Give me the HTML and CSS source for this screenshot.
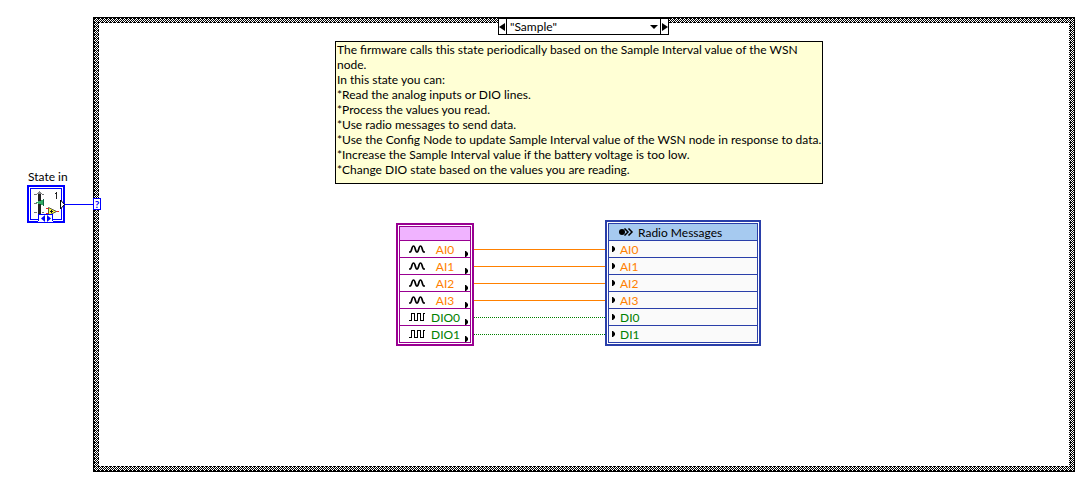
FILE: index.html
```html
<!DOCTYPE html>
<html lang="en">
<head>
<meta charset="utf-8">
<title>Sample state diagram</title>
<link rel="stylesheet" href="styles.css">
</head>
<body>
<main class="diagram">
  <section class="terminal">
    <h2 class="terminal-label">State in</h2>
    <div class="terminal-row">
      <svg class="terminal-icon" width="38" height="38" viewBox="0 0 38 38" shape-rendering="crispEdges" role="img" aria-label="Enum control">
        <rect width="38" height="38" fill="#00f"/>
        <rect x="2" y="2" width="34" height="34" fill="#fff"/>
        <rect x="3.500" y="3.500" width="31" height="31" fill="#fff" stroke="#00f"/>
        <path d="M7 9.500h3M7 18.500h3M7 27.500h3M15 9.500h2M15 27.500h2" stroke="#777"/>
        <rect x="11" y="9" width="3" height="20" fill="#222"/>
        <path d="M12 6h1v1h1v1h1v1h-5v-1h1v-1h1z" fill="#888"/>
        <path d="M9 17.500l8-3.500v7z" fill="#3a6"/>
        <path d="M16.500 14v7" stroke="#164"/>
        <path d="M29.500 7v7M28 8.500h1" stroke="#222" fill="none"/>
        <path d="M19 23.500h3M19 28.500h3M29 26.500h3" stroke="#e22"/>
        <path d="M21.500 22.500v8l8-4z" fill="#ff3" stroke="#554" shape-rendering="auto"/>
        <path d="M23 26.500h3M24.500 25v3" stroke="#111"/>
        <path d="M33.500 15v9l4-4.500z" fill="#fff" stroke="#000" shape-rendering="auto"/>
        <path d="M11 37v-8h15v8z" fill="#fff"/>
        <path d="M11.500 36v-6.500h14v6.500" fill="none" stroke="#00f"/>
        <path d="M18 30v7l-4-3.500zM20 30v7l4-3.500z" fill="#00f" shape-rendering="auto"/>
      </svg>
      <span class="wire wire-enum"></span>
    </div>
  </section>

  <section class="case">
    <span class="case-input">?</span>
    <div class="selector">
      <button class="step" aria-label="Previous case"><svg width="7" height="8" viewBox="0 0 7 8"><path d="M6 0v8L0 4z"/></svg></button>
      <button class="case-name"><span>"Sample"</span><svg width="8" height="4" viewBox="0 0 8 4"><path d="M0 0h8L4 4z"/></svg></button>
      <button class="step" aria-label="Next case"><svg width="7" height="8" viewBox="0 0 7 8"><path d="M1 0v8L7 4z"/></svg></button>
    </div>

    <div class="note">
      <p>The firmware calls this state periodically based on the Sample Interval value of the WSN<br>node.</p>
      <p>In this state you can:</p>
      <p>*Read the analog inputs or DIO lines.</p>
      <p>*Process the values you read.</p>
      <p>*Use radio messages to send data.</p>
      <p>*Use the Config Node to update Sample Interval value of the WSN node in response to data.</p>
      <p>*Increase the Sample Interval value if the battery voltage is too low.</p>
      <p>*Change DIO state based on the values you are reading.</p>
    </div>

    <svg class="symbols" width="0" height="0" aria-hidden="true">
      <symbol id="sine" viewBox="0 0 16 8"><path d="M0 7h1c2 0 1.500-6 3.500-6s1.500 6 3.500 6 1.500-6 3.500-6 1.500 6 3.500 6h1" fill="none" stroke="#000" stroke-width="1.700"/></symbol>
      <symbol id="square" viewBox="0 0 16 8"><path d="M0 7.500h2.500v-7h3v7h3v-7h3v7h3v-7h1.500" fill="none" stroke="#000" shape-rendering="crispEdges"/></symbol>
      <symbol id="arrow" viewBox="0 0 3 6"><path d="M0 0h1l2 2v2l-2 2H0z"/></symbol>
    </svg>

    <div class="flow">
      <div class="node io-node">
        <div class="node-head"></div>
        <div class="row analog"><svg class="wave"><use href="#sine"/></svg><span>AI0</span><svg class="arrow"><use href="#arrow"/></svg></div>
        <div class="row analog"><svg class="wave"><use href="#sine"/></svg><span>AI1</span><svg class="arrow"><use href="#arrow"/></svg></div>
        <div class="row analog"><svg class="wave"><use href="#sine"/></svg><span>AI2</span><svg class="arrow"><use href="#arrow"/></svg></div>
        <div class="row analog"><svg class="wave"><use href="#sine"/></svg><span>AI3</span><svg class="arrow"><use href="#arrow"/></svg></div>
        <div class="row digital"><svg class="wave"><use href="#square"/></svg><span>DIO0</span><svg class="arrow"><use href="#arrow"/></svg></div>
        <div class="row digital"><svg class="wave"><use href="#square"/></svg><span>DIO1</span><svg class="arrow"><use href="#arrow"/></svg></div>
      </div>
      <div class="wires">
        <span class="wire wire-analog"></span>
        <span class="wire wire-analog"></span>
        <span class="wire wire-analog"></span>
        <span class="wire wire-analog"></span>
        <span class="wire wire-digital"></span>
        <span class="wire wire-digital"></span>
      </div>
      <div class="node radio-node">
        <div class="node-head">
          <svg width="15" height="8" viewBox="0 0 15 8"><circle cx="3" cy="4" r="3"/><path d="M5.500 0.500L9 4 5.500 7.500M9.500 0.500L13 4 9.500 7.500" fill="none" stroke="#000" stroke-width="1.500"/></svg>
          <span>Radio Messages</span>
        </div>
        <div class="row analog"><svg class="arrow"><use href="#arrow"/></svg><span>AI0</span></div>
        <div class="row analog"><svg class="arrow"><use href="#arrow"/></svg><span>AI1</span></div>
        <div class="row analog"><svg class="arrow"><use href="#arrow"/></svg><span>AI2</span></div>
        <div class="row analog"><svg class="arrow"><use href="#arrow"/></svg><span>AI3</span></div>
        <div class="row digital"><svg class="arrow"><use href="#arrow"/></svg><span>DI0</span></div>
        <div class="row digital"><svg class="arrow"><use href="#arrow"/></svg><span>DI1</span></div>
      </div>
    </div>
  </section>
</main>
</body>
</html>
```
FILE: styles.css
```css
* {
  box-sizing: border-box;
}

body {
  margin: 0;
  background: #fff;
  color: #000;
  font: 12px/15px Lato, "Noto Sans", sans-serif;
}

p, h2 {
  margin: 0;
  font: inherit;
}

button {
  margin: 0;
  padding: 0;
  border: 0;
  background: #fff;
  color: inherit;
  font: inherit;
}

.diagram {
  display: flex;
  min-height: 100vh;
  padding: 17px 15px 15px 27px;
}

.terminal {
  flex: none;
  width: 66px;
  padding-top: 152px;
}

.terminal-label {
  padding-left: 1px;
}

.terminal-row {
  display: flex;
  align-items: center;
  padding-top: 1px;
}

.terminal-icon {
  flex: none;
}

.wire {
  display: block;
  flex: 1;
  border-top: 1px solid;
}

.wire-enum {
  color: #00f;
}

.case {
  position: relative;
  flex: 1;
  display: flex;
  flex-direction: column;
  align-items: center;
  border: 1px solid #000;
  background:
    linear-gradient(#fff, #fff) center / calc(100% - 10px) calc(100% - 10px) no-repeat,
    conic-gradient(at 3px 1px, #000 0 25%, transparent 0) 1px 0 / 4px 4px,
    repeating-conic-gradient(#000 0 25%, #fff 0 50%) 0 0 / 2px 2px;
}

.case-input {
  position: absolute;
  top: 180px;
  left: -1px;
  width: 8px;
  height: 12px;
  border: 1px solid #00f;
  background: #fff;
  color: #00f;
  font-size: 10px;
  font-weight: 700;
  line-height: 10px;
  text-align: center;
}

.selector {
  display: flex;
  width: 171px;
  height: 17px;
  margin-right: 1px;
  border: 1px solid #000;
  background: #fff;
}

.step {
  display: flex;
  align-items: center;
  flex: none;
  width: 7px;
}

.case-name {
  display: flex;
  flex: 1;
  align-items: center;
  justify-content: space-between;
  padding: 0 2px 0 3px;
  border: solid #000;
  border-width: 0 1px;
}

.note {
  width: 488px;
  min-height: 143px;
  margin: 6px 10px 0 0;
  padding: 0 1px;
  border: 1px solid #000;
  background: #ffffd5;
  white-space: nowrap;
}

.symbols {
  position: absolute;
}

.flow {
  display: flex;
  align-items: flex-start;
  margin: 36px 11px 0 0;
}

.node {
  padding: 1px;
  border: 2px solid;
}

.node-head,
.row {
  display: flex;
  align-items: center;
  height: 17px;
  border: solid;
  border-width: 0 1px 1px;
  border-color: inherit;
}

.io-node {
  width: 78px;
  margin-top: 3px;
  border-color: #990091;
}

.radio-node {
  width: 156px;
  border-color: #2a3fa9;
}

.node-head {
  border-top-width: 1px;
}

.io-node .node-head {
  height: 15px;
  background: #f0b3ff;
}

.radio-node .node-head {
  height: 18px;
  gap: 4px;
  padding-left: 10px;
  background: #a6caf0;
}

.radio-node .row {
  gap: 5px;
  padding-left: 3px;
  background: #fafafa;
}

.io-node .row {
  justify-content: space-between;
  padding: 0 2px 0 9px;
}

.io-node .row span {
  width: 28px;
  text-align: center;
}

.wave {
  width: 16px;
  height: 8px;
}

.arrow {
  width: 3px;
  height: 6px;
}

.io-node .arrow {
  align-self: flex-end;
}

.row.analog {
  border-color: inherit;
}

.analog span {
  color: #ff8000;
}

.digital span {
  color: #008000;
}

.wires {
  display: flex;
  flex-direction: column;
  gap: 16px;
  width: 131px;
  padding-top: 29px;
}

.wire-analog {
  flex: none;
  border-color: #ff8000;
}

.wire-digital {
  flex: none;
  height: 1px;
  border: 0;
  background: repeating-linear-gradient(90deg, #008000 0 1px, #fff 1px 2px);
}
```
